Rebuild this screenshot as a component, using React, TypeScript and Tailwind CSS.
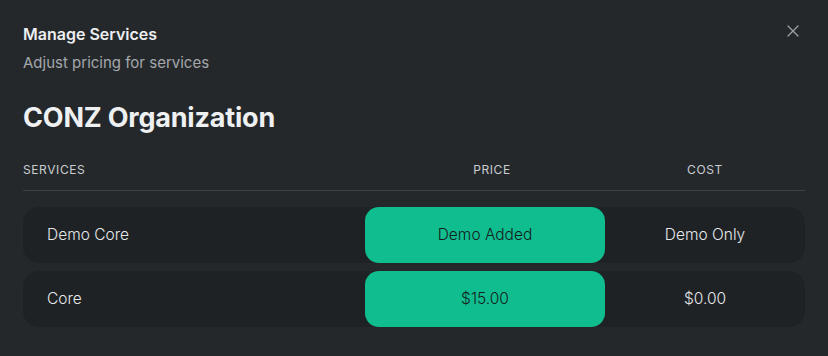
import { X } from "lucide-react";

export default function App() {
  const rows = [
    { name: "Demo Core", price: "Demo Added", cost: "Demo Only" },
    { name: "Core", price: "$15.00", cost: "$0.00" },
  ];
  return (
    <div
      className="w-[828px] h-[356px] bg-[#25282b] relative overflow-hidden"
      style={{ fontFamily: "Inter, 'Noto Sans', sans-serif" }}
    >
      <button className="absolute right-[25px] top-[21px] text-[#9ca0a4]">
        <X size={20} strokeWidth={1.5} />
      </button>
      <div className="pl-[23px] pr-[23px] pt-[22px]">
        <div className="text-[16px] font-semibold text-[#eceef0] leading-[24px]">Manage Services</div>
        <div className="text-[15px] text-[#a3a7ab] leading-[20px] mt-[7px]">Adjust pricing for services</div>
        <div className="text-[27px] font-bold text-[#eef0f2] leading-[34px] mt-[28px] tracking-[-0.2px]">CONZ Organization</div>
        <div className="mt-[27px] grid grid-cols-[342px_240px_200px] w-[782px] border-b border-[#3b3f43] pb-[12px] text-[12px] tracking-[0.6px] text-[#c9cdd0] leading-[16px]">
          <div>SERVICES</div>
          <div className="text-center pl-[14px]">PRICE</div>
          <div className="text-center">COST</div>
        </div>
        <div className="mt-[16px] flex flex-col gap-[8px] w-[782px]">
          {rows.map((r) => (
            <div key={r.name} className="grid grid-cols-[342px_240px_200px] h-[56px] bg-[#1f2225] rounded-[16px] text-[15.5px] leading-[20px] font-light">
              <div className="flex items-center pl-[24px] text-[#e6e8ea]">{r.name}</div>
              <div className="flex items-center justify-center bg-[#10bd8f] rounded-[14px] text-[#14201c]">{r.price}</div>
              <div className="flex items-center justify-center text-[#e6e8ea]">{r.cost}</div>
            </div>
          ))}
        </div>
      </div>
    </div>
  );
}
